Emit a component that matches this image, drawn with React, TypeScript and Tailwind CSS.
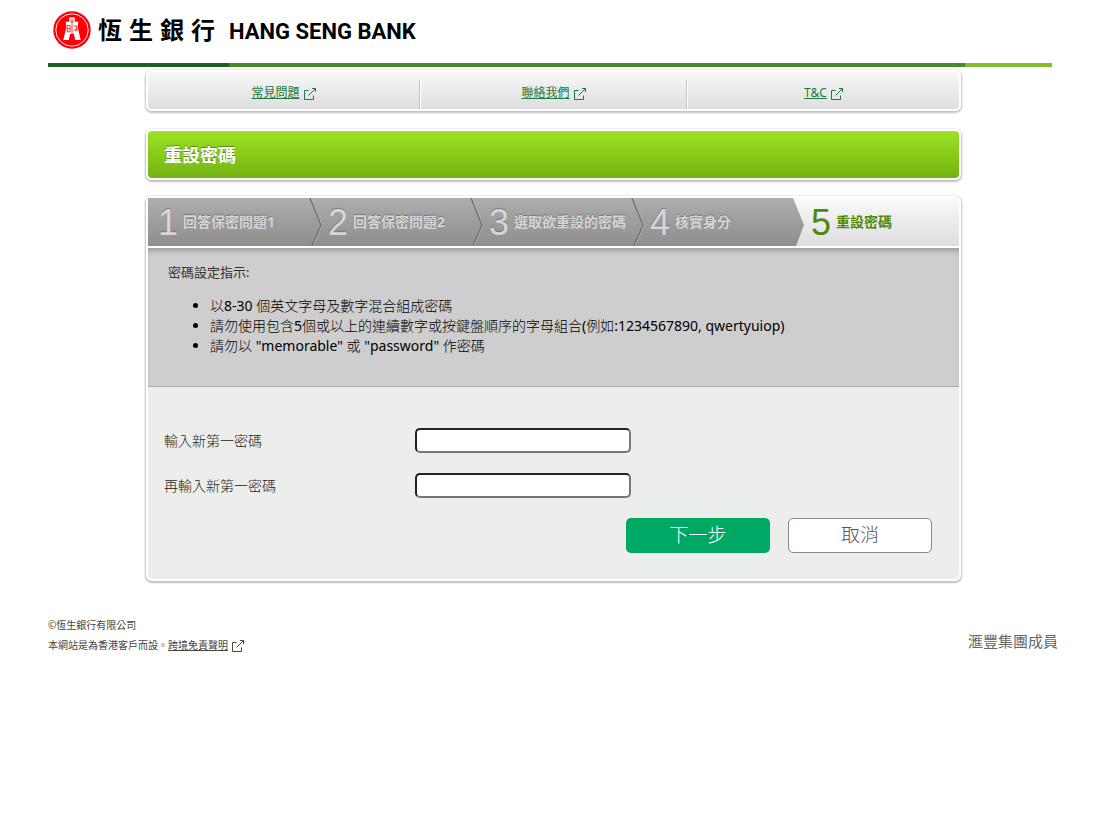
import { useState } from "react"

const sans = "font-['Noto_Sans','Noto_Sans_CJK_TC',sans-serif]"

const cardShadow = "shadow-[0_1px_2px_1px_rgba(0,0,0,0.25)]"

const links = ["常見問題", "聯絡我們", "T&C"]

const steps = ["回答保密問題1", "回答保密問題2", "選取欲重設的密碼", "核實身分", "重設密碼"]

const rules = [
  "以8-30 個英文字母及數字混合組成密碼",
  "請勿使用包含5個或以上的連續數字或按鍵盤順序的字母組合(例如:1234567890, qwertyuiop)",
  '請勿以 "memorable" 或 "password" 作密碼',
]

function ExternalIcon() {
  return (
    <svg viewBox="0 0 12 12" className="w-3 h-3 mt-[2px] shrink-0" fill="none" stroke="currentColor" aria-hidden="true">
      <path d="M4.5 2.5H.5v9h9V7.5" />
      <path d="M4.5 7.5l7-7M8 .5h3.5V4" />
    </svg>
  )
}

function Emblem() {
  return (
    <svg viewBox="0 0 38 38" className="w-[38px] h-[38px] shrink-0" aria-hidden="true">
      <circle cx="19" cy="19" r="18.7" fill="#fb0007" />
      <circle cx="19" cy="19" r="16.2" fill="none" stroke="#fff" strokeWidth="0.9" />
      <path
        d="M16.2 6.5h5.6v4.2h3.4l-.5 5.3 1 4.6 2 8.4h-5.4l-1.5-6.2h-3.6L15.7 29h-5.4l2-8.4 1-4.6-.5-5.3h3.4z"
        fill="#fff"
      />
      <g fill="none" stroke="#fb0007" strokeWidth="0.8">
        <path d="M18 8v3h2V8M19 11v11.5" />
        <path d="M14.2 14.5h2.9v6.3h-2.9zM14.2 17.6h2.9" />
        <path d="M20.8 15h3v4h-3M23.8 17l-1 3.4" />
      </g>
    </svg>
  )
}

function Header() {
  return (
    <header>
      <div className="flex items-center h-[63px] pl-[5px] pb-[3px]">
        <Emblem />
        <div className="flex gap-[7px] ml-[7px] text-2xl font-bold text-black" lang="zh-Hant">
          <span>恆</span>
          <span>生</span>
          <span>銀</span>
          <span>行</span>
        </div>
        <span className="ml-[14px] pt-[3px] text-[22px] font-bold text-black font-[Roboto,sans-serif]">
          HANG SENG BANK
        </span>
      </div>
      <div className="flex h-[4px]">
        <div className="w-[18%] bg-[#1f5e22]" />
        <div className="flex-1 bg-[#458c2b]" />
        <div className="w-[87px] bg-[#84bd2a]" />
      </div>
    </header>
  )
}

function StepArrow({ last }: { last: boolean }) {
  return (
    <svg viewBox="0 0 14 48" className="w-[14px] h-12 shrink-0" fill="none" aria-hidden="true">
      <defs>
        <linearGradient id="arrowFill" x1="0" y1="0" x2="0" y2="1">
          <stop offset="0" stopColor="#aeaeae" />
          <stop offset="1" stopColor="#8f8d8d" />
        </linearGradient>
      </defs>
      {last ? (
        <path d="M0 0h1l11 27-8 21H0z" fill="url(#arrowFill)" />
      ) : (
        <>
          <path d="M2 0l11 27-9 21" stroke="#bdbdbd" strokeWidth="1" />
          <path d="M1 0l11 27-9 21" stroke="#737272" strokeWidth="1.5" />
        </>
      )}
    </svg>
  )
}

function Steps({ current }: { current: number }) {
  return (
    <ol className="grid grid-cols-[161fr_161fr_161fr_161fr_167fr] h-12 bg-linear-to-b from-[#aeaeae] to-[#8f8d8d]">
      {steps.map((label, i) => {
        const active = i === current
        return (
          <li
            key={label}
            aria-current={active ? "step" : undefined}
            className={
              active
                ? "flex items-center whitespace-nowrap bg-linear-to-b from-[#fafafa] to-[#dddde0] text-[#4d8a0c]"
                : "flex items-center whitespace-nowrap text-[#d6d6d6] [text-shadow:0_-1px_1px_#777]"
            }
          >
            {i > 0 && <StepArrow last={active} />}
            <span className={i > 0 ? "ml-[5px] pt-[2px] text-4xl font-['Liberation_Sans',sans-serif]" : "ml-[10px] pt-[2px] text-4xl font-['Liberation_Sans',sans-serif]"}>
              {i + 1}
            </span>
            <span className="ml-[5px] text-sm font-bold">{label}</span>
          </li>
        )
      })}
    </ol>
  )
}

// Latin runs are set a little heavier than the Chinese text around them
function Rule({ text }: { text: string }) {
  return (
    <li>
      {text.split(/([\x20-\x7e]+)/).map((part, i) =>
        i % 2 ? (
          <span key={i} className="font-normal">
            {part}
          </span>
        ) : (
          part
        )
      )}
    </li>
  )
}

interface FieldProps {
  id: string
  label: string
  value: string
  onChange: (value: string) => void
}

function Field({ id, label, value, onChange }: FieldProps) {
  return (
    <div className="flex items-center">
      <label htmlFor={id} className="w-[251px] text-sm font-light text-[#222]">
        {label}
      </label>
      <input
        id={id}
        type="password"
        value={value}
        onChange={(e) => onChange(e.target.value)}
        className="w-[216px] h-[25px] px-1 bg-white rounded-[5px] border-2 border-t-[#222] border-l-[#222] border-r-[#767676] border-b-[#767676]"
      />
    </div>
  )
}

export default function App() {
  const [password, setPassword] = useState("")
  const [confirm, setConfirm] = useState("")

  return (
    <div className={`bg-white px-12 ${sans}`} lang="zh-Hant">
      <Header />

      <main className="pt-[3px] pl-[98px] pr-[91px]">
        <nav className={`grid grid-cols-[271fr_267fr_273fr] border-2 border-white rounded-md bg-linear-to-b from-[#f8f8f8] to-[#dedee0] ${cardShadow}`}>
          {links.map((link, i) => (
            <div key={link} className="flex pt-2">
              {i > 0 && <div className="w-[2px] bg-[#c4c4c4] border-r border-white" />}
              <a href="#" className="flex flex-1 items-center justify-center gap-1 h-[29px] pb-[3px] text-xs text-[#1c7a3a]">
                <span className="underline">{link}</span>
                <ExternalIcon />
              </a>
            </div>
          ))}
        </nav>

        <h1 className={`flex items-center mt-[18px] h-[51px] pl-4 border-2 border-white rounded-md bg-linear-to-b from-[#9be324] to-[#74b312] text-lg font-bold text-white [text-shadow:0_-1px_1px_#5a8a10] ${cardShadow}`}>
          重設密碼
        </h1>

        <div className={`mt-4 border-2 border-white rounded-md bg-[#eceeec] ${cardShadow}`}>
          <Steps current={4} />

          <section className="pt-[14px] pb-[30px] pl-5 border-t-2 border-t-white border-b border-b-[#aaa] bg-[#cecece] shadow-[inset_0_6px_6px_-4px_rgba(0,0,0,0.3)]">
            <h2 className="text-[13px] leading-5 text-[#333]">密碼設定指示:</h2>
            <ul className="mt-[14px] pl-[42px] list-disc text-sm leading-5 font-light text-black">
              {rules.map((rule) => (
                <Rule key={rule} text={rule} />
              ))}
            </ul>
          </section>

          <form className="pt-[41px] pb-[26px] pl-4 pr-[27px]" onSubmit={(e) => e.preventDefault()}>
            <div className="flex flex-col gap-5">
              <Field id="password" label="輸入新第一密碼" value={password} onChange={setPassword} />
              <Field id="confirm" label="再輸入新第一密碼" value={confirm} onChange={setConfirm} />
            </div>
            <div className="flex justify-end gap-[18px] mt-5">
              <button type="submit" className="w-36 h-[35px] rounded-[5px] bg-[#00a865] text-[19px] leading-none font-light text-white">
                下一步
              </button>
              <button type="button" className="w-36 h-[35px] rounded-[5px] border border-[#888] bg-white text-[19px] leading-none font-light text-[#555]">
                取消
              </button>
            </div>
          </form>
        </div>
      </main>

      <footer className="flex items-center justify-between mt-[34px] -mr-[6px] text-[#444]">
        <div className="text-[10px] leading-5">
          <p>©恆生銀行有限公司</p>
          <p className="flex items-center">
            本網站是為香港客戶而設。
            <a href="#" className="flex items-center gap-1">
              <span className="underline">跨境免責聲明</span>
              <ExternalIcon />
            </a>
          </p>
        </div>
        <p className="pt-3 text-[15px] text-[#666]">滙豐集團成員</p>
      </footer>
    </div>
  )
}
